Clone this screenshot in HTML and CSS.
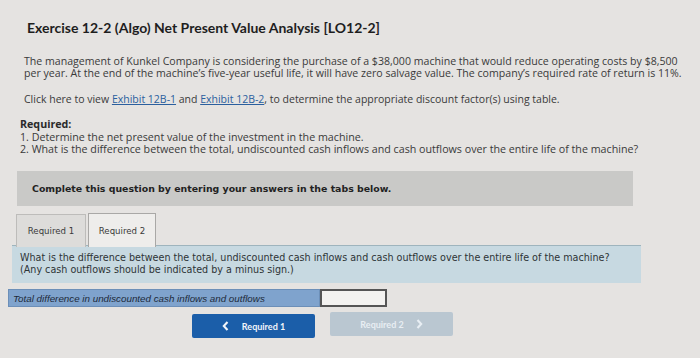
FILE: index.html
```html
<!DOCTYPE html>
<html>
<head>
<meta charset="utf-8">
<link rel="stylesheet" href="styles.css">
</head>
<body>
<div class="page">
  <h1 class="title">Exercise 12-2 (Algo) Net Present Value Analysis [LO12-2]</h1>
  <p class="intro">The management of Kunkel Company is considering the purchase of a $38,000 machine that would reduce operating costs by $8,500 per year. At the end of the machine’s five-year useful life, it will have zero salvage value. The company’s required rate of return is 11%.</p>
  <p class="click">Click here to view <a class="link">Exhibit 12B-1</a> and <a class="link">Exhibit 12B-2</a>, to determine the appropriate discount factor(s) using table.</p>
  <div class="required">
    <div class="req-head">Required:</div>
    <p class="req-list">1. Determine the net present value of the investment in the machine.
2. What is the difference between the total, undiscounted cash inflows and cash outflows over the entire life of the machine?</p>
  </div>
  <div class="complete">Complete this question by entering your answers in the tabs below.</div>
  <div class="tabs">
    <div class="tab">Required 1</div>
    <div class="tab active">Required 2</div>
  </div>
  <div class="question">What is the difference between the total, undiscounted cash inflows and cash outflows over the entire life of the machine?
(Any cash outflows should be indicated by a minus sign.)</div>
  <div class="answer-row">
    <div class="answer-label">Total difference in undiscounted cash inflows and outflows</div>
    <div class="answer-input"></div>
  </div>
  <div class="nav">
    <div class="btn prev"><svg class="chev-l" width="7" height="10" viewBox="0 0 7 10"><path d="M5.5 1 L1.8 5 L5.5 9" fill="none" stroke="currentColor" stroke-width="2.1"/></svg>Required 1</div>
    <div class="btn next">Required 2<svg class="chev-r" width="7" height="10" viewBox="0 0 7 10"><path d="M1.5 1 L5.2 5 L1.5 9" fill="none" stroke="currentColor" stroke-width="2.1"/></svg></div>
  </div>
</div>
</body>
</html>
```

FILE: styles.css
```css
html, body {
  margin: 0;
  padding: 0;
}
body {
  background: #e5e3e1;
  width: 700px;
  height: 358px;
  overflow: hidden;
  font-family: "Open Sans", "Lato", sans-serif;
  color: #2a2a2a;
}
.page {
  padding: 19px 0 0 24px;
}
.title {
  font-family: "Lato", sans-serif;
  font-weight: 700;
  font-size: 14px;
  line-height: 18px;
  margin: 0 0 0 3px;
  color: #1e1e1e;
}
.intro {
  margin: 18px 0 0 0;
  width: 664px;
  font-size: 10.6px;
  line-height: 12px;
  color: #3a3a3a;
}
.click {
  margin: 14px 0 0 0;
  font-size: 10.5px;
  line-height: 12px;
  color: #3a3a3a;
}
.link {
  color: #2b5f9e;
  text-decoration: underline;
}
.required {
  margin: 14px 0 0 -4px;
  font-size: 10.7px;
  line-height: 12px;
  color: #3a3a3a;
}
.req-head {
  font-weight: 700;
  color: #2a2a2a;
  line-height: 11px;
  margin-bottom: 1px;
}
.req-list {
  margin: 0;
  white-space: pre-line;
}
.complete {
  margin: 16px 0 0 -7px;
  width: 616px;
  height: 35px;
  box-sizing: border-box;
  padding: 0 0 0 15px;
  display: flex;
  align-items: center;
  background: #c9c9c7;
  font-family: "DejaVu Sans", sans-serif;
  font-weight: 700;
  font-size: 9.4px;
  color: #222;
}
.tabs {
  display: flex;
  align-items: flex-end;
  margin: 7px 0 0 -8px;
  gap: 2px;
}
.tab {
  width: 70px;
  height: 33px;
  box-sizing: border-box;
  display: flex;
  align-items: center;
  justify-content: center;
  background: #dddcda;
  border: 1px solid #bdbcba;
  border-bottom: none;
  font-family: "DejaVu Sans", sans-serif;
  font-size: 8.6px;
  color: #3a3a3a;
}
.tab.active {
  width: 68px;
  height: 34px;
  background: #eeedeb;
  border-color: #a9a8a6;
}
.question {
  margin: -2px 0 0 -12px;
  width: 629px;
  height: 38px;
  box-sizing: border-box;
  padding: 6px 0 0 8px;
  background: #c7d9e1;
  border-top: 1px solid #9eb4bd;
  font-family: "DejaVu Sans", sans-serif;
  font-size: 9.6px;
  line-height: 12px;
  white-space: pre-line;
  color: #2e3436;
}
.answer-row {
  display: flex;
  margin: 6px 0 0 -16px;
  height: 18px;
}
.answer-label {
  width: 312px;
  box-sizing: border-box;
  background: #7fa3cd;
  border: 1px solid #6c8fb8;
  padding-left: 4px;
  display: flex;
  align-items: center;
  font-family: "Liberation Sans", sans-serif;
  font-style: italic;
  font-size: 9.8px;
  color: #1d2a3a;
}
.answer-input {
  width: 67px;
  box-sizing: border-box;
  background: #f3f2f0;
  border: 2px solid #555;
}
.nav {
  display: flex;
  margin: 5px 0 0 168px;
  gap: 15px;
  align-items: flex-start;
}
.btn {
  height: 24px;
  box-sizing: border-box;
  display: flex;
  align-items: center;
  justify-content: center;
  font-family: "Lato", sans-serif;
  font-weight: 700;
  font-size: 9px;
  border-radius: 2px;
}
.btn.prev {
  width: 123px;
  margin-top: 2px;
  background: #1b5ea9;
  color: #f2f5fa;
}
.btn.next {
  width: 123px;
  background: #bac7d1;
  color: #e8eef3;
}
.chev-l {
  margin-right: 13px;
}
.chev-r {
  margin-left: 12px;
}
```
